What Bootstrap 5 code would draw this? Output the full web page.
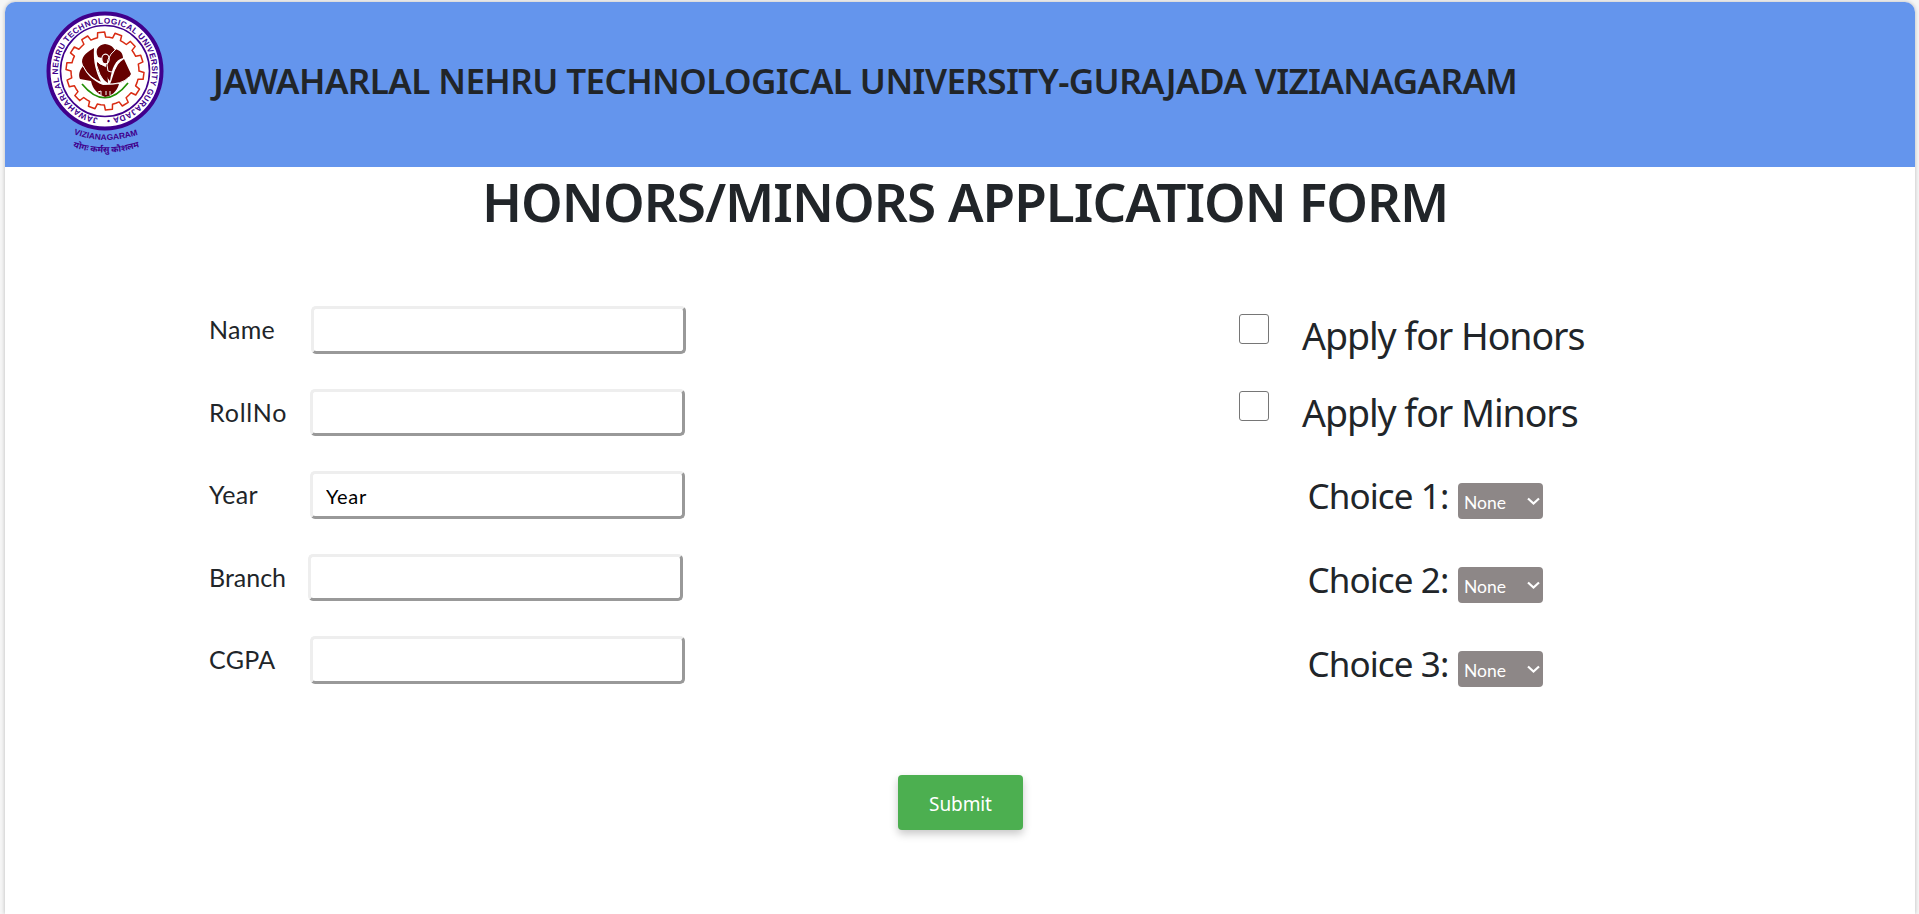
<!DOCTYPE html>
<html lang="en">
<head>
<meta charset="utf-8">
<meta name="viewport" content="width=device-width, initial-scale=1">
<title>Honors/Minors Application Form</title>
<link href="https://cdn.jsdelivr.net/npm/bootstrap@5.3.0/dist/css/bootstrap.min.css" rel="stylesheet">
<style>
body{background:#f6f6f6;font-family:"Noto Sans","Open Sans",sans-serif;color:#212529;height:914px;overflow:hidden}
.sheet{margin:2px 4px 0 5px;height:912px;border-radius:10px 10px 0 0;box-shadow:0 0 4px rgba(0,0,0,.25);overflow:hidden}
.banner{height:165px;background:#6495ed;padding-left:40px}
.crest{width:120px;height:150px;margin-top:5.5px}
.uni{font-size:35px;font-weight:600;line-height:42px;margin:58px 0 0 48px;white-space:nowrap;letter-spacing:-.59px}
.form-title{font-size:53px;font-weight:600;line-height:64px;margin:3px 0 0 477px;white-space:nowrap;letter-spacing:-.97px}
.fields{margin:72px 0 0 204px;width:500px}
.field-row{height:82.5px}
.field-row label{font-family:Lato,sans-serif;font-size:25px;line-height:46px;white-space:nowrap;letter-spacing:.3px}
.field-row input{width:375px;height:47.5px;border:3px solid;border-color:#eee #999 #999 #eee;border-radius:5px;font:20px Lato,sans-serif;letter-spacing:.7px;padding:2px 13px 0;color:#000;background:#fff;flex:none}
.l-name{width:102px}.l-std{width:101px}.l-std.wider{letter-spacing:.8px}.l-branch{width:99px}.field-row .l-branch{letter-spacing:0}
.options{margin:76px 0 0 530px;width:400px}
.apply{height:76.5px;font-size:37.5px;line-height:51px}
.apply input{width:30px;height:30px;margin:4px 33px 0 0;border:1px solid #767676;border-radius:3px;flex:none;appearance:none;background:#fff}
.apply label{letter-spacing:-1.05px;white-space:nowrap}
.choices{margin-top:9.5px}
.choice{height:84px;padding-left:68.5px;font-size:35px;line-height:46px}
.choice label{width:150.5px;letter-spacing:-.9px;white-space:nowrap}
.pick{width:85px;height:36px;margin-top:10.5px;border-radius:4px;background:#8d8787;color:#fff;font:17.5px/36px Lato,sans-serif;padding:3px 3px 0 6px}
.pick svg{margin-top:-2px}
.send{width:125px;height:55px;border:0;border-radius:4px;background:#4caf50;color:#fff;font-size:19px;letter-spacing:-.1px;padding:4px 0 0;box-shadow:0 4px 8px rgba(0,0,0,.22);margin:0 0 0 893px}
.form-area{height:541px}
</style>
</head>
<body>
<main class="sheet bg-white">
<header class="banner d-flex align-items-start">
<svg class="crest flex-shrink-0" viewBox="0 0 120 150" role="img" aria-label="University crest">
<defs>
<path id="ring" d="M60 110.5A47 47.5 0 1 1 60.1 110.5"/>
<path id="arc1" d="M28.5 126Q60 138 95 126"/>
<path id="arc2" d="M25 138Q60 151 97 138"/>
</defs>
<ellipse cx="60" cy="63" rx="56.5" ry="57.5" fill="#fff" stroke="#40008c" stroke-width="4"/>
<ellipse cx="60" cy="63" rx="44.5" ry="45.5" fill="none" stroke="#40008c" stroke-width="1.6"/>
<text font-family="Liberation Sans,Arial,sans-serif" font-size="8.2" font-weight="700" fill="#40008c"><textPath href="#ring" startOffset="7" textLength="287" lengthAdjust="spacing">JAWAHARLAL NEHRU TECHNOLOGICAL UNIVERSITY GURAJADA •</textPath></text>
<path id="gear" fill="none" stroke="#d92b12" stroke-width="1.5" stroke-linejoin="round" d=""/>
<g transform="translate(0 1)">
<g fill="#660000">
<path d="M60 35C67 36 72 40 69 46L64 54 60 50 53 48C49 40 54 36 60 35Z"/>
<path d="M49 39C44 42 37 46 37 53 39 63 48 70 56 73 51 63 48 53 49 39Z"/>
<path d="M70 40C75 41 78 44 78 49 70 51 67 59 65 72 56 62 62 49 70 40Z"/>
<path d="M79 50L86 65C82 72 75 75 65 75 69 67 69 56 79 50Z"/>
<path d="M38 57C33 63 34 68 35 70L46 72C48 81 53 85 60 88 66 87 72 83 74 75L58 76C48 72 42 66 38 57Z"/>
<ellipse cx="60.5" cy="50" rx="3.7" ry="4.8" stroke="#fff" stroke-width="1.2"/>
<path d="M52 53L62 59 63 74C56 70 51 61 52 53Z"/>
</g>
<path d="M51 39Q48 57 60 74M71 40Q59 50 63 62Q70 66 72 53M51 51Q54 56 61 57M38 57Q44 70 60 75Q77 76 84 68M53 83l3-1v4M61 82v4M65 82v4" fill="none" stroke="#fff" stroke-width="1"/>
<path d="M37 75Q60 103 83 74" fill="none" stroke="#229006" stroke-width="1.7"/>
</g>
<text font-family="Liberation Sans,Arial,sans-serif" font-size="8.2" font-weight="700" fill="#40008c"><textPath href="#arc1" startOffset="0" textLength="66" lengthAdjust="spacingAndGlyphs">VIZIANAGARAM</textPath></text>
<text font-family="Noto Sans Devanagari,Noto Sans,sans-serif" font-size="8.5" font-weight="700" fill="#40008c"><textPath href="#arc2" startOffset="3" textLength="68" lengthAdjust="spacingAndGlyphs">योगः कर्मसु कौशलम</textPath></text>
</svg>
<h1 class="uni">JAWAHARLAL NEHRU TECHNOLOGICAL UNIVERSITY-GURAJADA VIZIANAGARAM</h1>
</header>
<h2 class="form-title">HONORS/MINORS APPLICATION FORM</h2>
<form>
<div class="form-area d-flex align-items-start">
<section class="fields">
<div class="field-row d-flex"><label class="l-name" for="name">Name</label><input id="name"></div>
<div class="field-row d-flex"><label class="l-std wider" for="roll">RollNo</label><input id="roll"></div>
<div class="field-row d-flex"><label class="l-std" for="year">Year</label><input id="year" value="Year"></div>
<div class="field-row d-flex"><label class="l-branch" for="branch">Branch</label><input id="branch"></div>
<div class="field-row d-flex"><label class="l-std" for="cgpa">CGPA</label><input id="cgpa"></div>
</section>
<section class="options">
<div class="apply d-flex"><input type="checkbox" id="honors"><label for="honors">Apply for Honors</label></div>
<div class="apply d-flex"><input type="checkbox" id="minors"><label for="minors">Apply for Minors</label></div>
<div class="choices">
<div class="choice d-flex"><label>Choice 1:</label><div class="pick d-flex justify-content-between align-items-center"><span>None</span><svg width="13" height="9" viewBox="0 0 13 9"><path d="M1 1.5L6.5 6.5 12 1.5" fill="none" stroke="#fff" stroke-width="2.2"/></svg></div></div>
<div class="choice d-flex"><label>Choice 2:</label><div class="pick d-flex justify-content-between align-items-center"><span>None</span><svg width="13" height="9" viewBox="0 0 13 9"><path d="M1 1.5L6.5 6.5 12 1.5" fill="none" stroke="#fff" stroke-width="2.2"/></svg></div></div>
<div class="choice d-flex"><label>Choice 3:</label><div class="pick d-flex justify-content-between align-items-center"><span>None</span><svg width="13" height="9" viewBox="0 0 13 9"><path d="M1 1.5L6.5 6.5 12 1.5" fill="none" stroke="#fff" stroke-width="2.2"/></svg></div></div>
</div>
</section>
</div>
<button type="button" class="send">Submit</button>
</form>
</main>
<script src="https://cdn.jsdelivr.net/npm/bootstrap@5.3.0/dist/js/bootstrap.bundle.min.js"></script>
<script>
// Fourteen-tooth cog around the rose
let d="";const n=14;
for(let i=0;i<n;i++)[[-.5,34],[-.27,34],[-.2,39],[.2,39],[.27,34]].forEach(([o,r])=>{
const a=(i+o)*2*Math.PI/n-Math.PI/2-.1;
d+=(d?"L":"M")+(60+r*Math.cos(a)).toFixed(1)+" "+(63+r*Math.sin(a)).toFixed(1);});
document.getElementById("gear").setAttribute("d",d+"Z");
</script>
</body>
</html>
